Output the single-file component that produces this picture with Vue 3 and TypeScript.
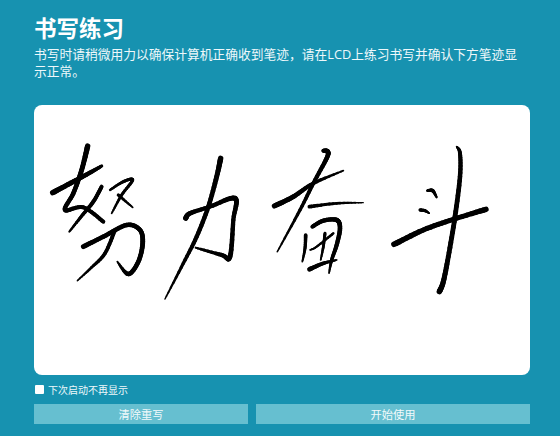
<script setup lang="ts">
type Pt = [number, number, number];
interface Group { ox: number; oy: number; strokes: Pt[][] }

const groups: Group[] = [
  { ox: 40, oy: 130, strokes: [
    [[143,48,3.6],[125,120,3.2],[100,190,3],[75,240,2.8],[130,232,2.6],[190,275,2.6]],
    [[38,188,3.6],[100,155,3.2],[150,128,2.8],[185,108,2]],
    [[185,170,2.6],[160,215,2.6],[125,258,2.2],[88,305,1.2]],
    [[210,180,1.4],[250,155,2],[278,150,2],[245,195,2],[215,250,1]],
    [[235,195,2.2],[278,232,1]],
    [[130,350,3.2],[190,320,3],[260,285,3],[300,300,3],[308,340,3.2],[295,395,3],[265,432,3],[232,395,1]],
    [[225,300,2.6],[195,370,2.4],[155,412,1.8],[112,452,.8]],
  ]},
  { ox: 150, oy: 140, strokes: [
    [[212,55,3.6],[200,110,3.2],[175,200,3],[140,290,2.8],[100,370,2.2],[45,477,.8]],
    [[107,235,3.4],[120,220,3],[180,200,2.6],[255,175,3.4],[250,240,2.8],[240,350,3.2],[215,345,2.8],[137,323,1.2]],
  ]},
  { ox: 260, oy: 140, strokes: [
    [[190,32,2.6],[203,35,3.2],[200,55,3],[160,130,2.6],[120,210,2.2],[52,335,.9]],
    [[43,198,3.4],[100,170,3.2],[160,130,2.4],[250,92,1]],
    [[148,200,2.4],[230,190,1.8],[310,188,.6]],
  ]},
  { ox: 290, oy: 210, strokes: [
    [[47,75,2.4],[45,115,2],[37,155,1]],
    [[67,50,2.6],[100,32,2.8],[140,30,3],[150,55,3],[140,105,2.8],[125,150,2.2],[117,190,.8]],
    [[60,120,.8],[80,110,1.4],[130,70,1.6]],
    [[105,70,2],[100,110,1.8],[92,150,1]],
    [[58,178,3],[100,160,2.4],[140,150,1]],
  ]},
  { ox: 380, oy: 140, strokes: [
    [[230,20,1],[240,40,2.6],[240,110,3],[225,230,3.2],[205,350,3.2],[190,425,3.4],[178,455,3.6]],
    [[42,313,3.8],[130,270,3.4],[220,238,3.2],[318,208,3.6]],
    [[142,152,1.6],[158,152,2.4],[170,172,1.2]],
    [[120,210,2],[135,212,2],[148,220,.8]],
  ]},
];

// Catmull-Rom sampling, so each stroke keeps the pen's varying width.
function sample(pts: Pt[], steps = 8): Pt[] {
  const out: Pt[] = [];
  for (let i = 0; i < pts.length - 1; i++) {
    const p0 = pts[Math.max(i - 1, 0)];
    const p1 = pts[i];
    const p2 = pts[i + 1];
    const p3 = pts[Math.min(i + 2, pts.length - 1)];
    for (let s = 0; s < steps; s++) {
      const t = s / steps;
      const f = (k: number) =>
        0.5 * (2 * p1[k] + (p2[k] - p0[k]) * t +
          (2 * p0[k] - 5 * p1[k] + 4 * p2[k] - p3[k]) * t * t +
          (3 * p1[k] - p0[k] - 3 * p2[k] + p3[k]) * t * t * t);
      out.push([f(0), f(1), p1[2] + (p2[2] - p1[2]) * t]);
    }
  }
  out.push(pts[pts.length - 1]);
  return out;
}

const segments = groups.flatMap((g) =>
  g.strokes.flatMap((st) => {
    const pts = sample(st).map(([x, y, w]): Pt => [g.ox + x / 3, g.oy + y / 3, w]);
    return pts.slice(1).map((p, i) => ({
      d: `M${pts[i][0].toFixed(2)} ${pts[i][1].toFixed(2)}L${p[0].toFixed(2)} ${p[1].toFixed(2)}`,
      w: (((p[2] + pts[i][2]) / 2) * 1.45 + 0.2).toFixed(2),
    }));
  }),
);
</script>

<template>
  <main class="page">
    <h1 class="title">书写练习</h1>
    <p class="desc">书写时请稍微用力以确保计算机正确收到笔迹，请在LCD上练习书写并确认下方笔迹显示正常。</p>
    <div class="pad">
      <svg class="ink" viewBox="34 105 496 270" aria-label="手写笔迹">
        <path v-for="(s, i) in segments" :key="i" :d="s.d" :stroke-width="s.w" />
      </svg>
    </div>
    <label class="check">
      <input type="checkbox" class="box" />
      <span>下次启动不再显示</span>
    </label>
    <div class="actions">
      <button class="btn clear" type="button">清除重写</button>
      <button class="btn start" type="button">开始使用</button>
    </div>
  </main>
</template>

<style scoped>
.page {
  box-sizing: border-box;
  width: 560px;
  height: 436px;
  padding: 14px 30px 0 34px;
  display: flex;
  flex-direction: column;
  background: #1792b0;
  color: #fff;
  font-family: "Open Sans", "Noto Sans CJK SC", sans-serif;
  overflow: hidden;
}
.title {
  margin: 0;
  font-size: 22.5px;
  line-height: 30px;
  font-weight: 700;
}
.desc {
  margin: 2px 0 0;
  max-width: 490px;
  height: 59px;
  font-size: 12.75px;
  line-height: 17px;
  color: #eef8fb;
}
.pad {
  height: 270px;
  background: #fff;
  border-radius: 8px;
  overflow: hidden;
}
.ink {
  display: block;
  width: 496px;
  height: 270px;
  fill: none;
  stroke: #000;
  stroke-linecap: round;
}
.check {
  display: flex;
  align-items: center;
  gap: 4px;
  height: 20px;
  margin-top: 4px;
  padding-left: 1px;
  font-size: 10px;
  color: #eef8fb;
}
.box {
  appearance: none;
  width: 9px;
  height: 9px;
  margin: 0;
  background: #fff;
  border-radius: 1px;
}
.actions {
  display: flex;
  gap: 8px;
  margin-top: 5px;
}
.btn {
  height: 20px;
  padding: 0;
  border: 0;
  background: #66bfd0;
  color: #f2fafb;
  font: inherit;
  font-size: 11.25px;
}
.clear {
  width: 214px;
}
.start {
  width: 274px;
}
</style>
